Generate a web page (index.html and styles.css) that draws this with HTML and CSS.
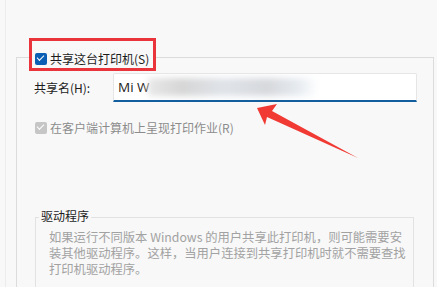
FILE: index.html
```html
<!DOCTYPE html>
<html lang="zh-CN">
<head>
	<meta charset="utf-8"/>
	<title>共享</title>
	<link rel="stylesheet" href="styles.css">
</head>
<body>
<div class="page">
	<!--共享设置-->
	<div class="share-box">
		<div class="share-box__head">
			<span class="check check_on"></span>
			<span class="share-box__title">共享这台打印机(S)</span>
		</div>
		<div class="share-name">
			<span class="share-name__label">共享名(H):</span>
			<div class="share-name__input">
				Mi W
				<span class="share-name__blur"></span>
			</div>
		</div>
		<div class="render-row">
			<span class="check check_off"></span>
			<span class="render-row__txt">在客户端计算机上呈现打印作业(R)</span>
		</div>

		<!--驱动程序-->
		<div class="driver-box">
			<div class="driver-box__title">驱动程序</div>
			<p class="driver-box__text">如果运行不同版本 Windows 的用户共享此打印机，则可能需要安<br>装其他驱动程序。这样，当用户连接到共享打印机时就不需要查找<br>打印机驱动程序。</p>
		</div>
	</div>

	<!--红色箭头-->
	<svg class="mark-arrow" width="437" height="287" viewBox="0 0 437 287">
		<path d="M257 108 L277 104 L272 111 L358 158 L267 117 L265 125 Z" fill="#f03a33"/>
	</svg>
</div>
</body>
</html>
```

FILE: styles.css
```css
html,body{
	margin: 0;
	padding: 0;
	height: 100%;
}
body{
	background: #f8f8f8;
	font-family: "Noto Sans CJK SC", "Noto Sans", sans-serif;
	font-size: 12px;
	color: #1c1c1c;
	overflow: hidden;
}
.page{
	position: relative;
	height: 287px;
	padding-top: 57px;
	box-sizing: border-box;
	margin-left: 5px;
	border-left: 1px solid #ececec;
}
/*外框*/
.share-box{
	margin-left: 10px;
	width: 416px;
	height: 230px;
	border: 1px solid #dcdcdc;
	border-bottom: 0;
}
.share-box__head{
	display: flex;
	width: fit-content;
	align-items: center;
	margin: -20px 0 0 12px;
	padding: 10px 4px 1px 3px;
	border: 3px solid #e8343a;
	background: #f8f8f8;
	height: 16px;
	line-height: 16px;
}
.share-box__title{
	margin-left: 3px;
}
/*复选框*/
.check{
	position: relative;
	display: inline-block;
	width: 12px;
	height: 12px;
	border-radius: 2px;
	flex: none;
}
.check:after{
	content: '';
	position: absolute;
	left: 2px;
	top: 2px;
	width: 6px;
	height: 3px;
	border-left: 1.5px solid #fff;
	border-bottom: 1.5px solid #fff;
	transform: rotate(-45deg);
}
.check_on{
	background: #0a5fb4;
}
.check_off{
	background: #c6c6c6;
}
/*共享名*/
.share-name{
	display: flex;
	align-items: center;
	margin-top: 2px;
	padding-left: 17px;
}
.share-name__label{
	width: 79px;
}
.share-name__input{
	position: relative;
	width: 298px;
	height: 26px;
	line-height: 26px;
	padding-left: 4px;
	background: #fff;
	border: 1px solid #e6e6e6;
	border-bottom: 2px solid #135e9f;
	border-radius: 2px 2px 0 0;
	font-family: "Open Sans", "Noto Sans", sans-serif;
	font-size: 13.5px;
	color: #222;
	overflow: hidden;
}
.share-name__blur{
	position: absolute;
	left: 34px;
	top: 4px;
	width: 170px;
	height: 18px;
	background: linear-gradient(90deg, #e8e8e8 0%, #d6d6d6 20%, #e0e4e9 45%, #d6d8dc 70%, #e6ebf0 88%, #fff 100%);
	filter: blur(3px);
}
/*呈现打印作业*/
.render-row{
	display: flex;
	align-items: center;
	margin-top: 18px;
	padding-left: 18px;
	line-height: 16px;
	color: #8c8c8c;
}
.render-row__txt{
	margin-left: 3px;
}
/*驱动程序*/
.driver-box{
	margin: 81px 0 0 18px;
	width: 377px;
	height: 70px;
	border: 1px solid #e2e2e2;
	border-bottom: 0;
}
.driver-box__title{
	width: fit-content;
	margin: -10px 0 0 3px;
	padding: 0 2px;
	line-height: 16px;
	background: #f8f8f8;
	color: #1c1c1c;
}
.driver-box__text{
	margin: 5px 0 0;
	padding: 0 0 0 13px;
	line-height: 16px;
	font-size: 12.3px;
	white-space: nowrap;
	color: #a2a2a2;
}
/*标注*/
.mark-arrow{
	position: absolute;
	left: -6px;
	top: 0;
	pointer-events: none;
}
```
